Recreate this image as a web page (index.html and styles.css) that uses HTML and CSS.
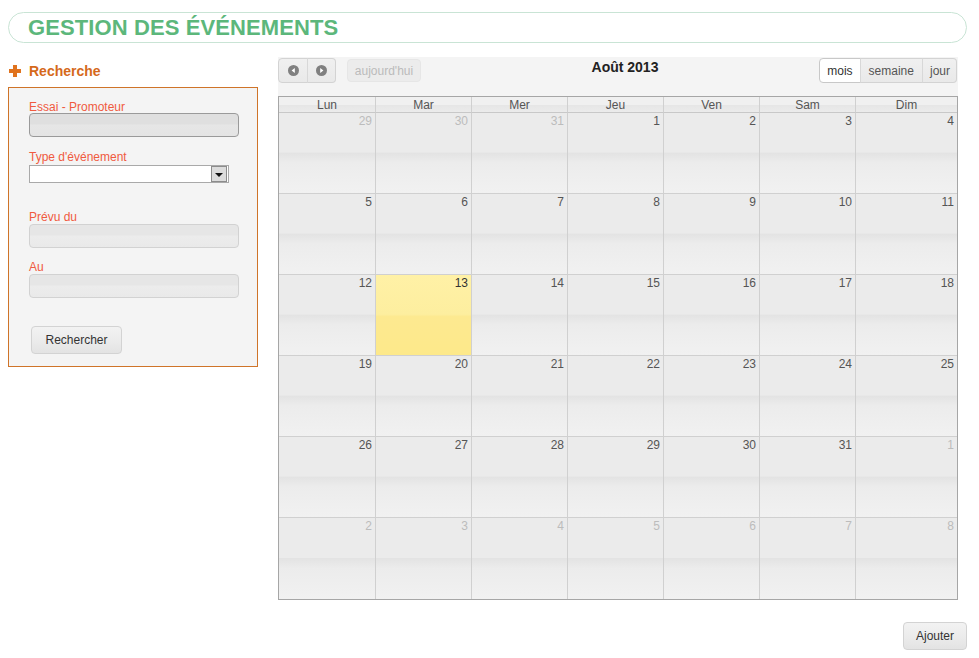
FILE: index.html
```html
<!DOCTYPE html>
<html lang="fr">
<head>
<meta charset="utf-8">
<title>Gestion des événements</title>
<link rel="stylesheet" href="styles.css">
</head>
<body>
<header class="page-title"><h1>GESTION DES ÉVÉNEMENTS</h1></header>
<main class="main">
  <aside class="sidebar">
    <h2 class="search-title"><span class="plus"></span>Recherche</h2>
    <form class="search-box">
      <label class="lbl lbl-first">Essai - Promoteur</label>
      <input class="field field-active" type="text">
      <label class="lbl lbl-type">Type d'événement</label>
      <div class="select"><span class="select-btn"><span class="tri"></span></span></div>
      <label class="lbl lbl-prevu">Prévu du</label>
      <input class="field" type="text">
      <label class="lbl lbl-au">Au</label>
      <input class="field" type="text">
      <button type="button" class="btn btn-search">Rechercher</button>
    </form>
  </aside>
  <section class="calendar">
    <div class="toolbar">
      <div class="tb-left">
        <div class="btn-group">
          <span class="tb-btn nav-btn"><svg width="11" height="11" viewBox="0 0 11 11"><circle cx="5.5" cy="5.5" r="5.5" fill="#808080"/><path d="M6.8 3 L3.6 5.5 L6.8 8 Z" fill="#fff"/></svg></span>
          <span class="tb-btn nav-btn"><svg width="11" height="11" viewBox="0 0 11 11"><circle cx="5.5" cy="5.5" r="5.5" fill="#808080"/><path d="M4.2 3 L7.4 5.5 L4.2 8 Z" fill="#fff"/></svg></span>
        </div>
        <span class="tb-btn today-btn">aujourd'hui</span>
      </div>
      <div class="tb-title">Août 2013</div>
      <div class="tb-right">
        <div class="btn-group">
          <span class="tb-btn view-btn active">mois</span>
          <span class="tb-btn view-btn">semaine</span>
          <span class="tb-btn view-btn">jour</span>
        </div>
      </div>
    </div>
    <div class="grid">
      <div class="hd">Lun</div><div class="hd">Mar</div><div class="hd">Mer</div><div class="hd">Jeu</div><div class="hd">Ven</div><div class="hd">Sam</div><div class="hd last">Dim</div>

      <div class="day other">29</div><div class="day other">30</div><div class="day other">31</div><div class="day">1</div><div class="day">2</div><div class="day">3</div><div class="day last">4</div>
      <div class="day">5</div><div class="day">6</div><div class="day">7</div><div class="day">8</div><div class="day">9</div><div class="day">10</div><div class="day last">11</div>
      <div class="day">12</div><div class="day today">13</div><div class="day">14</div><div class="day">15</div><div class="day">16</div><div class="day">17</div><div class="day last">18</div>
      <div class="day">19</div><div class="day">20</div><div class="day">21</div><div class="day">22</div><div class="day">23</div><div class="day">24</div><div class="day last">25</div>
      <div class="day">26</div><div class="day">27</div><div class="day">28</div><div class="day">29</div><div class="day">30</div><div class="day">31</div><div class="day other last">1</div>
      <div class="day other bottom">2</div><div class="day other bottom">3</div><div class="day other bottom">4</div><div class="day other bottom">5</div><div class="day other bottom">6</div><div class="day other bottom">7</div><div class="day other bottom last">8</div>
    </div>
    <div class="actions">
      <button type="button" class="btn btn-add">Ajouter</button>
    </div>
  </section>
</main>
</body>
</html>
```

FILE: styles.css
```css
* { box-sizing: border-box; }

html, body {
  margin: 0;
  padding: 0;
  background: #fff;
  font-family: "Liberation Sans", Arial, sans-serif;
  color: #333;
}

.page-title {
  margin: 12px 12px 0 8px;
  height: 31px;
  border: 1px solid #c9e4d5;
  border-radius: 16px;
  padding-left: 19px;
  display: flex;
  align-items: center;
}

.page-title h1 {
  margin: 0;
  font-size: 22px;
  font-weight: bold;
  color: #5cb77b;
  letter-spacing: 0.1px;
}

.main {
  display: flex;
  align-items: flex-start;
  margin-top: 14px;
  padding-left: 8px;
}

/* Sidebar */
.sidebar {
  width: 250px;
  flex: none;
}

.search-title {
  margin: 0;
  height: 30px;
  display: flex;
  align-items: center;
  font-size: 14px;
  font-weight: bold;
  color: #d5691b;
  padding-bottom: 2px;
}

.plus {
  position: relative;
  width: 12px;
  height: 12px;
  margin: 0 8px 0 1px;
  flex: none;
}
.plus::before, .plus::after {
  content: "";
  position: absolute;
  background: #e0731e;
}
.plus::before { left: 0; top: 4px; width: 12px; height: 4px; }
.plus::after { left: 4px; top: 0; width: 4px; height: 12px; }

.search-box {
  margin: 0;
  border: 1px solid #cf7429;
  background: #f4f4f4;
  padding: 11px 20px 12px 20px;
  display: flex;
  flex-direction: column;
  align-items: flex-start;
}

.lbl {
  display: block;
  font-size: 12px;
  line-height: 16px;
  height: 14px;
  color: #f05a3f;
  margin-bottom: 1px;
}
.lbl-first { margin-bottom: 0; }
.lbl-type { margin-top: 12px; margin-bottom: 2px; }
.lbl-prevu { margin-top: 26px; }
.lbl-au { margin-top: 11px; }

.field {
  display: block;
  width: 210px;
  height: 24px;
  margin: 0;
  border: 1px solid #d2d2d2;
  border-radius: 4px;
  background: linear-gradient(#e6e6e6 0, #e6e6e6 45%, #ececec 50%, #e9e9e9 100%);
  font: 12px "Liberation Sans", Arial, sans-serif;
  padding: 0 4px;
  outline: none;
}
.field-active {
  border-color: #9a9a9a;
  background: linear-gradient(#dfdfdf 0, #dfdfdf 45%, #e6e6e6 50%, #e4e4e4 100%);
}

.select {
  position: relative;
  width: 200px;
  height: 18px;
  border: 1px solid #a9a9a9;
  background: #fff;
}
.select-btn {
  position: absolute;
  right: 1px;
  top: 0;
  width: 16px;
  height: 16px;
  background: #dcdcdc;
  border: 1px solid #8c8c8c;
  display: flex;
  align-items: center;
  justify-content: center;
}
.tri {
  width: 0;
  height: 0;
  border-left: 4px solid transparent;
  border-right: 4px solid transparent;
  border-top: 4px solid #111;
  margin-top: 1px;
}

.btn {
  font: 12px "Liberation Sans", Arial, sans-serif;
  color: #333;
  height: 28px;
  border: 1px solid #d3d3d3;
  border-radius: 4px;
  background: linear-gradient(#f2f2f2 0, #ececec 50%, #e3e3e3 100%);
  padding: 0;
  cursor: pointer;
}
.btn-search {
  margin-top: 28px;
  margin-left: 2px;
  width: 91px;
}

/* Calendar */
.calendar {
  width: 680px;
  margin-left: 20px;
  flex: none;
}

.toolbar {
  height: 39px;
  background: #f4f4f4;
  display: flex;
  align-items: flex-start;
  justify-content: space-between;
  padding-top: 1px;
}

.tb-left, .tb-right {
  display: flex;
  align-items: flex-start;
  width: 200px;
}
.tb-right { justify-content: flex-end; padding-right: 1px; }

.btn-group { display: flex; }

.tb-btn {
  height: 25px;
  display: flex;
  align-items: center;
  justify-content: center;
  font-size: 12px;
  color: #555;
  border: 1px solid #d3d3d3;
  background: linear-gradient(#f0f0f0 0, #e9e9e9 100%);
}

.nav-btn { width: 29px; }
.btn-group .tb-btn + .tb-btn { border-left: 1px solid #d8d8d8; margin-left: -1px; }
.btn-group .tb-btn:first-child { border-radius: 4px 0 0 4px; }
.btn-group .tb-btn:last-child { border-radius: 0 4px 4px 0; }
.nav-btn:first-child { width: 30px; }

.today-btn {
  margin-left: 11px;
  margin-top: 1px;
  height: 23px;
  width: 74px;
  border-radius: 4px;
  color: #bbb;
  border-color: #e6e6e6;
  background: #ececec;
}

.tb-title {
  font-size: 14px;
  font-weight: bold;
  color: #222;
  line-height: 18px;
  padding-top: 0;
  margin-left: 14px;
}

.view-btn { padding: 0 7px; color: #555; }
.view-btn:nth-child(2) { padding: 0 8px; }
.view-btn:nth-child(3) { padding: 0 6px 0 7px; }
.view-btn.active {
  background: #fff;
  color: #333;
  border-color: #c8c8c8;
}

.grid {
  display: grid;
  grid-template-columns: 97px 96px 96px 96px 96px 96px 1fr;
  grid-template-rows: 16px repeat(6, 81px);
  border: 1px solid #a6a6a6;
}

.hd {
  font-size: 12px;
  color: #555;
  text-align: center;
  line-height: 16px;
  border-right: 1px solid #d0d0d0;
  border-bottom: 1px solid #c8c8c8;
  background: linear-gradient(#f0f0f0 0, #f0f0f0 50%, #e6e6e6 55%, #ebebeb 100%);
}

.day {
  font-size: 12px;
  color: #555;
  text-align: right;
  padding: 1px 3px 0 0;
  line-height: 14px;
  border-right: 1px solid #d0d0d0;
  border-bottom: 1px solid #d0d0d0;
  background: linear-gradient(#ebebeb 0, #ebebeb 49%, #e3e3e3 50%, #ececec 62%, #f1f1f1 100%);
}
.day.other { color: #bcbcbc; }
.day.last, .hd.last { border-right: 0; }
.day.bottom { border-bottom: 0; }

.day.today {
  background: linear-gradient(#fff1a6 0, #fdee9f 49%, #fde990 52%, #fde98a 100%);
  color: #333;
}

.actions {
  display: flex;
  justify-content: flex-end;
  margin-top: 22px;
  margin-right: -9px;
}
.btn-add { width: 64px; height: 28px; }
```
